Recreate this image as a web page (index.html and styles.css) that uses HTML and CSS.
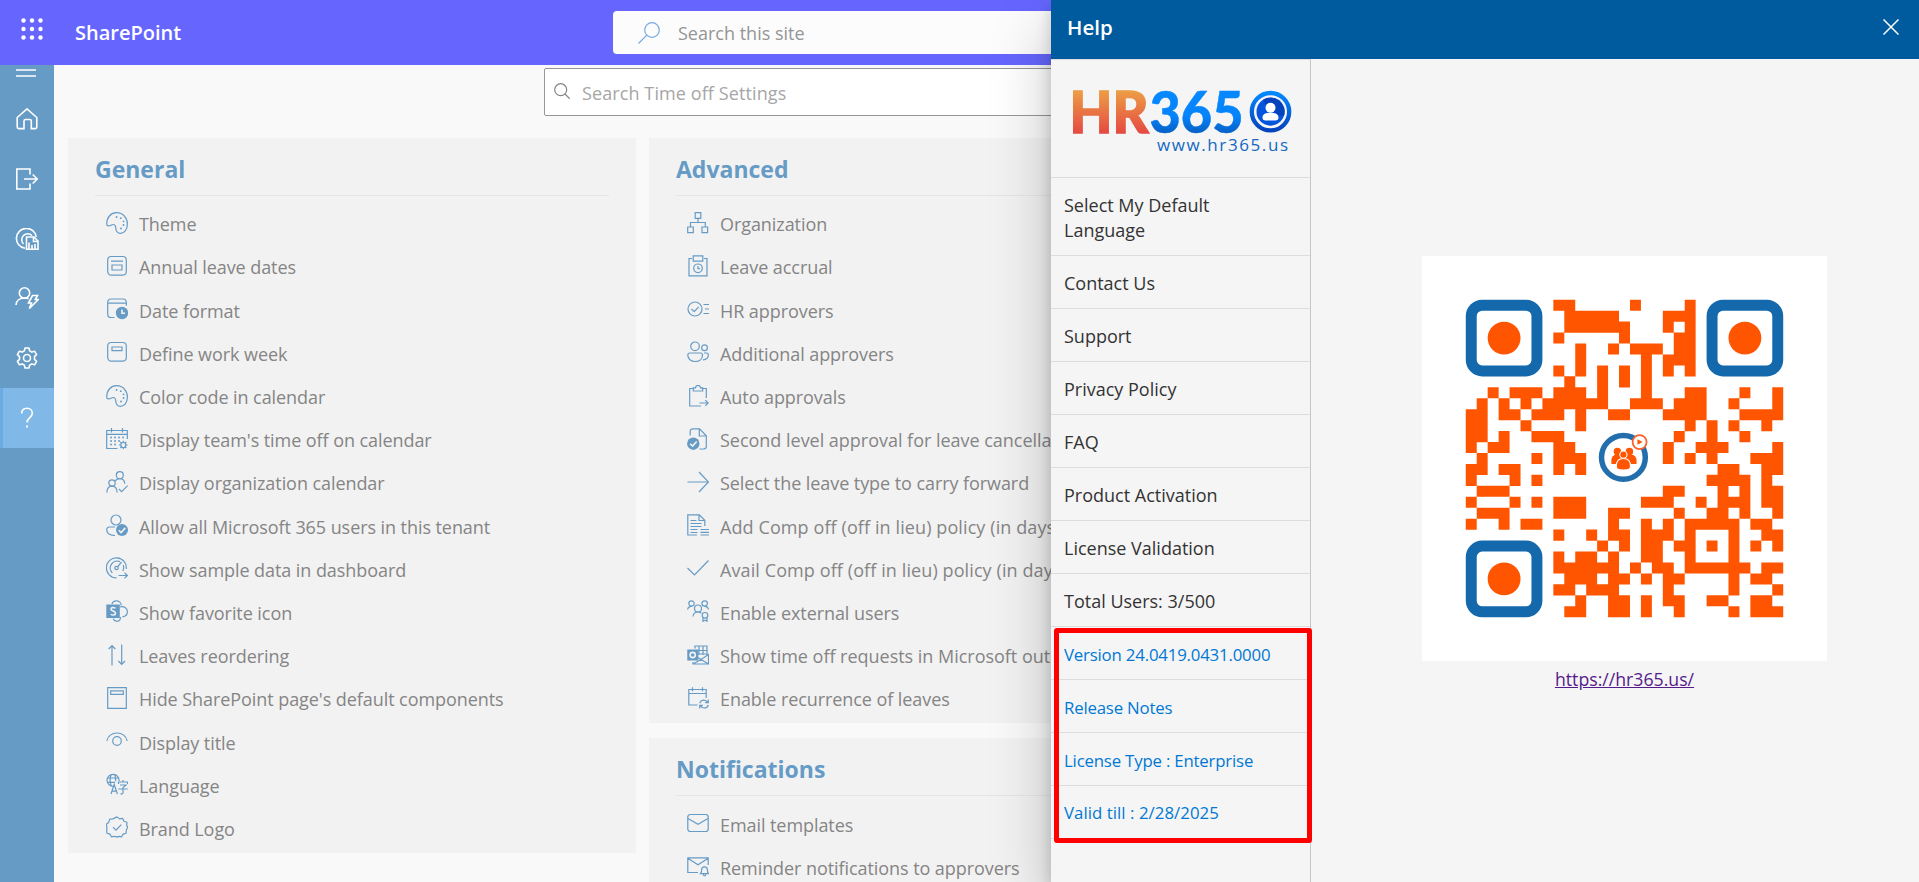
FILE: index.html
```html
<!DOCTYPE html>
<html lang="en">
<head>
<meta charset="utf-8">
<title>SharePoint - Time off Settings</title>
<link rel="stylesheet" href="styles.css">
</head>
<body>
<svg class="defs" aria-hidden="true">
  <symbol id="palette" viewBox="0 0 22 22"><path d="M.7 12C.7 5 5 .7 10.7 .7 17 .7 21.4 6 21.4 12c0 6-3.400 9.400-6.900 9.400-4 0-4.700-2.900-4.800-5.900-.2-3-2.200-3.500-4.200-2.500C3 14.300.7 14.500.7 12z"/><path class="dot" d="M10.500 5h.1M14.700 6.200h.1M17.500 9.300h.1M17.500 13h.1M15 16.500h.1"/></symbol>
  <symbol id="annual" viewBox="0 0 22 22"><rect x="1.700" y="1.500" width="18.600" height="18.600" rx="3.500"/><path d="M5 6.200h12M6 10h10v5H6z"/></symbol>
  <symbol id="dateformat" viewBox="0 0 22 22"><path d="M8.500 19.500H5a3.300 3.300 0 0 1-3.300-3.300V4.200A3.300 3.300 0 0 1 5 1h12a3.300 3.300 0 0 1 3.300 3.300v3.500M1.700 5.200h18.600"/><circle class="fill" cx="16" cy="15" r="6.200"/><path class="cut" d="M16 11.500V15.300h3"/></symbol>
  <symbol id="workweek" viewBox="0 0 22 22"><rect x="1.700" y="1.500" width="18.600" height="18.600" rx="3.500"/><path d="M6 6h10v3.700H6z"/></symbol>
  <symbol id="teamcal" viewBox="0 0 22 22"><path d="M11.500 20.500H.7v-18h20.600V11M.7 6.300h20.600M5.500 0v4.500M16.500 0v4.500"/><path class="dot" d="M5 9.500h.1M9 9.500h.1M13 9.500h.1M17 9.500h.1M5 13h.1M9 13h.1M13 13h.1M5 16.500h.1M9 16.500h.1"/><circle cx="17.300" cy="17" r="2.500"/><path d="M17.300 12.800v1.700M17.300 19.500v1.700M13 17h1.800M19.800 17h1.800M14.300 14l1.200 1.200M19 18.800l1.300 1.200M20.300 14L19 15.200M15.500 18.800L14.300 20"/></symbol>
  <symbol id="orgcal" viewBox="0 0 22 22"><circle cx="13.800" cy="4.200" r="3.500"/><circle cx="6" cy="12" r="3.200"/><path d="M.8 21.500C1 17.500 3 15.200 6 15.200s5 2.300 5.200 6.300M9.200 9.800c1-1.400 2.700-2.200 4.600-2.200 3 0 4.700 2 5 5M13 18l2.600 2.600 6-6"/></symbol>
  <symbol id="allowusers" viewBox="0 0 22 22"><circle cx="10" cy="6" r="5"/><path d="M9 13H3.500C1.500 13 .7 14.300 .7 15.500c0 3.700 3.300 5.900 8.300 6"/><circle class="fill" cx="16" cy="16" r="6"/><path class="cut" d="M12.800 16.200l2.300 2.300 4.200-4.600"/></symbol>
  <symbol id="gauge" viewBox="0 0 22 22"><path d="M10.500 20.800A10 10 0 1 1 20.300 12"/><path d="M6.300 16A7 7 0 0 1 14 4.600M17.200 8c.8 2 .7 4-.4 6M11.600 9.800L15.500 5M12.500 18.500h8.500M18.500 15.700l2.800 2.800-2.800 2.800"/><circle cx="10.500" cy="11" r="1.700"/></symbol>
  <symbol id="sp" viewBox="0 0 22 22"><path d="M6 4C6.500 2 8.300.8 10.400.8c2.700 0 4.700 2 4.800 4.600M14 7c3.800-1.200 7.400 1 7.400 4.600 0 3-2 5-5 5.200M14.500 17c0 2.500-1.400 4.300-3.600 4.300-1.800 0-3.200-1-3.600-2.600"/><rect class="fill" x=".3" y="4.500" width="13.500" height="13.500"/><path class="cut" d="M9.500 8.200C7 7 5 7.500 5 9.200c0 2.200 4.500 1.500 4.500 4 0 1.900-2.500 2.300-4.800 1.200"/></symbol>
  <symbol id="reorder" viewBox="0 0 22 22"><path d="M6 21.500V1.500M2.700 5L6 1.500 9.300 5M15.700.5v20M12.400 17l3.300 3.500L19 17"/></symbol>
  <symbol id="hidepage" viewBox="0 0 22 22"><path d="M1.700 .7h18.600v20.600H1.700zM4.700 3.800h12.600v3.500H4.700z"/></symbol>
  <symbol id="eye" viewBox="0 0 22 22"><path d="M.8 11C1.600 6 6 3 11 3s9.400 3 10.200 8"/><circle cx="11" cy="11" r="4.300"/></symbol>
  <symbol id="lang" viewBox="0 0 22 22"><path d="M8 13.200A6 6 0 1 1 13 8M1 5h11.500M1 9.300h8M5.300 13C3.700 9 3.700 5 5.300 1.200M8.300 1.200c1.200 2 1.500 4 1.300 7M5 21l3.200-9.500L11.400 21M6 18.200h4.500M12.500 11V9h9v2M17 7v2M14 12h6l-3 2.500v5c0 1.200-.6 1.500-2.500 1.300M12.300 16h9.400"/></symbol>
  <symbol id="brand" viewBox="0 0 22 22"><path d="M11 .9l2.500 2 3.100-.6 1.300 2.900 3 1-.2 3.200 1 1.900-1.400 2.800-.2 3.100-3 .9-1.500 2.700-3.100-.5L11 21.100l-2.500-.8-3.100.5-1.500-2.700-3-.9L.7 14.100.9 11.300.3 8.400l2.500-2.200.9-3 3.200-.3z" stroke-linejoin="round"/><path d="M7 11.200l3 3 5.300-5.500"/></symbol>
  <symbol id="org" viewBox="0 0 22 22"><path d="M8.200.7h5.600v5.600H8.200zM.7 15h5.600v5.600H.7zM15 15h5.600v5.600H15zM11 6.300v4.200M3.500 15v-4.500h14.800V15"/></symbol>
  <symbol id="accrual" viewBox="0 0 22 22"><path d="M5 3.500H2v17.300h18V3.500h-3M6.200.9h9.600v5.300H6.200z"/><circle cx="11" cy="13.300" r="4.300"/><path d="M11 11v2.600h2"/></symbol>
  <symbol id="approver" viewBox="0 0 22 22"><circle cx="8" cy="11" r="7"/><path d="M4.500 11l2.700 2.700 4.500-4.800M16.500 6.500H22M18 11h4M16.500 15.500H22"/></symbol>
  <symbol id="people" viewBox="0 0 22 22"><circle cx="8" cy="5.300" r="4.300"/><circle cx="17.500" cy="6.700" r="2.900"/><path d="M3 12h10.500c1.300 0 2 .8 2 2 0 4-3 6.500-7.300 6.500S.8 18 .8 14c0-1.200.9-2 2.200-2zM17 12h2.500c1.200 0 1.900.7 1.900 1.800 0 3-1.900 4.900-5.400 5"/></symbol>
  <symbol id="clip" viewBox="0 0 22 22"><path d="M14 21H2.700V3.500h3.600M14.700 3.500h4.600V13M6.300 2.800h2.300a2.400 2.400 0 0 1 4.800 0h2.300V6H6.300zM12.500 18h8.700M18.300 15.200l2.900 2.800-2.900 2.900"/></symbol>
  <symbol id="doccheck" viewBox="0 0 22 22"><path d="M3.200 7.500V3.200A2.400 2.400 0 0 1 5.600.8h7l6.700 7v10.800a2.400 2.400 0 0 1-2.400 2.400h-4.500M12.300.8V8h7"/><circle class="fill" cx="6.300" cy="15.700" r="6.200"/><path class="cut" d="M3.200 15.800l2.300 2.300 4.200-4.600"/></symbol>
  <symbol id="arrow" viewBox="0 0 22 22"><path d="M.5 11h21M12 1l9.500 10L12 21"/></symbol>
  <symbol id="doclines" viewBox="0 0 22 22"><path d="M10 21H.8V.8h11.500l5.500 5.500V12M12 .8v5.700h5.800M3.500 6.500h6M3.500 9.500h11M3.500 12.500h11M3.500 15.500h7M3.500 18.500h7M13.500 15.500H22M13.500 18.300H22M13.500 21H22"/></symbol>
  <symbol id="check" viewBox="0 0 22 22"><path d="M.5 11l7 7L21.500 3.500"/></symbol>
  <symbol id="extusers" viewBox="0 0 22 22"><circle cx="4.500" cy="3.500" r="2.700"/><circle cx="17.700" cy="3.500" r="2.700"/><circle cx="11" cy="8.500" r="3.500"/><path d="M.6 9.500c.3-2 1.700-3.200 3.900-3.200M21.500 9.500c-.3-2-1.700-3.200-3.900-3.200M6 16.500c.3-2.800 2.200-4.500 5-4.500 1.500 0 2.500.4 3.400 1.200M16 17.500V21.300l2-1.200 2 1.200v-3.800"/><circle cx="18" cy="15.300" r="2.800"/></symbol>
  <symbol id="outlook" viewBox="0 0 22 22"><path d="M8 4.500V2h12v9M8 6.500h12M8 10h12M12 2v9M16 2v9M6 18v2h15.500V10.500L14 15.500l7.500 4.500M6 20l8-4.500-4-2.500"/><rect class="fill" x=".3" y="5.500" width="11" height="11"/><circle class="cut" cx="5.700" cy="11" r="2.600"/></symbol>
  <symbol id="recur" viewBox="0 0 22 22"><path d="M10.500 18H1.800V2.500h17.400V11M1.800 6.500h17.400M5.500 .3v4M15.500.3v4M12.800 16.300c.5-2 2-3.200 4-3.200 1.800 0 3 .8 4 2.300M21.300 12.500v3.200h-3.200M21.300 18c-.6 2-2 3-4 3-1.800 0-3-.7-4-2.200M12.700 21.500v-3.200h3.200"/></symbol>
  <symbol id="mail" viewBox="0 0 22 22"><rect x=".8" y="2.500" width="20.400" height="17" rx="2.500"/><path d="M1 6.500l10 5.800 10-5.800"/></symbol>
  <symbol id="reminder" viewBox="0 0 22 22"><path d="M11 17.500H.8V2.800h20.400V10M.8 3.200L11 9.700l10.200-6.500M13.500 18.700h8c-1-1-1.100-1.700-1.100-3.800 0-1.900-1.200-3-2.900-3s-2.900 1.100-2.900 3c0 2.100-.1 2.800-1.100 3.800zM16.300 19c0 2.500 2.500 2.500 2.500 0"/></symbol>
</svg>

<header class="suite">
  <svg class="waffle" viewBox="0 0 22 22"><g><circle cx="2.500" cy="2.500" r="2.200"/><circle cx="11" cy="2.500" r="2.200"/><circle cx="19.500" cy="2.500" r="2.200"/><circle cx="2.500" cy="11" r="2.200"/><circle cx="11" cy="11" r="2.200"/><circle cx="19.500" cy="11" r="2.200"/><circle cx="2.500" cy="19.500" r="2.200"/><circle cx="11" cy="19.500" r="2.200"/><circle cx="19.500" cy="19.500" r="2.200"/></g></svg>
  <span class="suite-name">SharePoint</span>
  <div class="site-search">
    <svg viewBox="0 0 22 22"><circle cx="14" cy="8" r="7.300"/><path d="M8.800 13.200L.5 21.500"/></svg>
    <span>Search this site</span>
  </div>
</header>

<div class="body">
  <nav class="rail">
    <svg class="burger" viewBox="0 0 20 8"><path d="M0 1h20M0 7h20"/></svg>
    <a class="rail-item low"><svg viewBox="0 0 22 22"><path d="M1.200 9.500L11 .9l9.800 8.600V19a1.600 1.600 0 0 1-1.600 1.600h-3.900V13a1.500 1.500 0 0 0-1.500-1.500H9.500A1.500 1.500 0 0 0 8 13v7.600H2.800A1.600 1.600 0 0 1 1.200 19z"/></svg></a>
    <a class="rail-item low"><svg viewBox="0 0 22 22"><path d="M14 6.500V1H.8v20H14v-5.500M8 11h13M16.700 6.500l4.500 4.500-4.500 4.500"/></svg></a>
    <a class="rail-item low"><svg viewBox="0 0 24 22"><path d="M10 20.300A10 10 0 1 1 21.300 9M8.500 16A6 6 0 1 1 17 7.500M11.500 9h7.500l4 4v8.300H11.500zM18.500 9v4.500H23M14 20.500v-6M17 20.500V17M20 20.500V16"/></svg></a>
    <a class="rail-item"><svg viewBox="0 0 24 22"><circle cx="9.500" cy="6" r="5.200"/><path d="M1 18c.3-4.300 3.700-7 8.500-7 1.800 0 3 .3 4 .8M17.500 8.500h5l-2.200 4h3l-9 9 2.200-5.500h-3z"/></svg></a>
    <a class="rail-item"><svg viewBox="0 0 22 22"><circle cx="11" cy="11" r="3.500"/><path stroke-linejoin="round" d="M9 1h4l.6 2.800 2.200 1.300 2.800-.9 2 3.400-2.100 2v2.800l2.100 2-2 3.400-2.800-.9-2.200 1.300L13 21H9l-.6-2.800-2.200-1.300-2.800.9-2-3.400 2.100-2V9.600l-2.100-2 2-3.400 2.800.9 2.200-1.300z"/></svg></a>
    <a class="rail-item active"><svg viewBox="0 0 22 22"><path d="M5.700 6.500C5.700 3 8 1.200 11 1.200s5.300 1.900 5.300 5c0 4.300-5.300 4.500-5.300 9.300M11 18.300v2.400"/></svg></a>
  </nav>

  <main class="content">
    <div class="settings-search">
      <svg viewBox="0 0 16 16"><circle cx="6.700" cy="6.700" r="6"/><path d="M11 11l4.700 4.700"/></svg>
      <span>Search Time off Settings</span>
    </div>
    <div class="columns">
      <div class="column">
        <section class="card">
          <h2>General</h2>
          <ul>
            <li><svg><use href="#palette"/></svg>Theme</li>
            <li><svg><use href="#annual"/></svg>Annual leave dates</li>
            <li><svg><use href="#dateformat"/></svg>Date format</li>
            <li><svg><use href="#workweek"/></svg>Define work week</li>
            <li><svg><use href="#palette"/></svg>Color code in calendar</li>
            <li><svg><use href="#teamcal"/></svg>Display team's time off on calendar</li>
            <li><svg><use href="#orgcal"/></svg>Display organization calendar</li>
            <li><svg><use href="#allowusers"/></svg>Allow all Microsoft 365 users in this tenant</li>
            <li><svg><use href="#gauge"/></svg>Show sample data in dashboard</li>
            <li><svg><use href="#sp"/></svg>Show favorite icon</li>
            <li><svg><use href="#reorder"/></svg>Leaves reordering</li>
            <li><svg><use href="#hidepage"/></svg>Hide SharePoint page's default components</li>
            <li><svg><use href="#eye"/></svg>Display title</li>
            <li><svg><use href="#lang"/></svg>Language</li>
            <li><svg><use href="#brand"/></svg>Brand Logo</li>
          </ul>
        </section>
      </div>
      <div class="column">
        <section class="card">
          <h2>Advanced</h2>
          <ul>
            <li><svg><use href="#org"/></svg>Organization</li>
            <li><svg><use href="#accrual"/></svg>Leave accrual</li>
            <li><svg><use href="#approver"/></svg>HR approvers</li>
            <li><svg><use href="#people"/></svg>Additional approvers</li>
            <li><svg><use href="#clip"/></svg>Auto approvals</li>
            <li class="even"><svg><use href="#doccheck"/></svg>Second level approval for leave cancellation</li>
            <li><svg><use href="#arrow"/></svg>Select the leave type to carry forward</li>
            <li class="roomy"><svg><use href="#doclines"/></svg>Add Comp off (off in lieu) policy (in days)</li>
            <li class="roomy"><svg><use href="#check"/></svg>Avail Comp off (off in lieu) policy (in days)</li>
            <li><svg><use href="#extusers"/></svg>Enable external users</li>
            <li class="even"><svg><use href="#outlook"/></svg>Show time off requests in Microsoft outlook</li>
            <li><svg><use href="#recur"/></svg>Enable recurrence of leaves</li>
          </ul>
        </section>
        <section class="card">
          <h2>Notifications</h2>
          <ul>
            <li><svg><use href="#mail"/></svg>Email templates</li>
            <li><svg><use href="#reminder"/></svg>Reminder notifications to approvers</li>
          </ul>
        </section>
      </div>
    </div>
  </main>
</div>

<aside class="panel">
  <div class="panel-head">
    <span>Help</span>
    <svg viewBox="0 0 16 16"><path d="M.5 .5l15 15M15.500 .5L.5 15.500"/></svg>
  </div>
  <div class="panel-body">
    <div class="help-nav">
      <div class="logo">
        <svg width="259" height="117" viewBox="0 0 259 117">
          <defs>
            <linearGradient id="warm" gradientUnits="userSpaceOnUse" x1="0" y1="32" x2="0" y2="73"><stop offset="0" stop-color="#ec9b45"/><stop offset="1" stop-color="#e54a42"/></linearGradient>
            <linearGradient id="cool" gradientUnits="userSpaceOnUse" x1="0" y1="32" x2="0" y2="73"><stop offset="0" stop-color="#0588ff"/><stop offset=".6" stop-color="#0583fb"/><stop offset="1" stop-color="#0560c4"/></linearGradient>
            <linearGradient id="ring" x1="0" y1="0" x2="0" y2="1"><stop offset="0" stop-color="#0588ff"/><stop offset="1" stop-color="#0443bd"/></linearGradient>
          </defs>
          <text class="logo-hr" x="18.500" y="72.500" textLength="79" lengthAdjust="spacingAndGlyphs" fill="url(#warm)" stroke="url(#warm)" stroke-width="1.500">HR</text>
          <text class="logo-hr" x="98.500" y="72.500" textLength="94" lengthAdjust="spacingAndGlyphs" fill="url(#cool)" stroke="url(#cool)" stroke-width=".5">365</text>
          <circle cx="219.500" cy="51.700" r="18.700" fill="none" stroke="url(#ring)" stroke-width="4.300"/>
          <circle cx="219.500" cy="51.700" r="14" fill="#0555dc"/>
          <path d="M212 39.800a14 14 0 0 1 21 16c-3 1-16-4-21-16z" fill="#0443bd"/>
          <circle cx="219.500" cy="47.700" r="5" fill="#fff"/>
          <path d="M211.500 57.500c0-3.500 3.500-4.700 8-4.700s8 1.200 8 4.700-3 3-8 3-8 .5-8-3z" fill="#fff"/>
          <text class="logo-url" x="106" y="90.500" textLength="131">www.hr365.us</text>
        </svg>
      </div>
      <a>Select My Default Language</a>
      <a>Contact Us</a>
      <a>Support</a>
      <a>Privacy Policy</a>
      <a>FAQ</a>
      <a>Product Activation</a>
      <a>License Validation</a>
      <a>Total Users: 3/500</a>
      <div class="license">
        <a>Version 24.0419.0431.0000</a>
        <a>Release Notes</a>
        <a>License Type : Enterprise</a>
        <a>Valid till : 2/28/2025</a>
        <div class="highlight"></div>
      </div>
    </div>
    <div class="qr-area">
      <svg class="qr" viewBox="-4 -4 37 37">
        <path transform="translate(0 .5)" stroke="#ff5500" stroke-width="1.010" fill="none" d="
M8 0h2M15 0h1M20 0h1
M9 1h5M18 1h3
M9 2h6M18 2h1M20 2h1
M8 3h1M14 3h1M19 3h2
M10 4h1M13 4h1M15 4h3M19 4h2
M10 5h1M16 5h1M18 5h3
M8 6h1M10 6h1M12 6h1M14 6h1M16 6h1M18 6h1M20 6h1
M9 7h1M12 7h1M14 7h1M16 7h1
M2 8h1M4 8h3M8 8h3M12 8h1M16 8h1M20 8h2M25 8h1M28 8h1
M1 9h1M3 9h1M5 9h1M7 9h6M15 9h3M19 9h3M24 9h1M28 9h1
M0 10h2M3 10h2M6 10h3M10 10h1M13 10h2M18 10h4M25 10h4
M0 11h2M5 11h1M10 11h1M20 11h1M22 11h1M24 11h1M27 11h1
M0 12h2M3 12h1M6 12h3M19 12h1M22 12h1M25 12h1
M0 13h1M2 13h2M8 13h2M18 13h1M21 13h3M28 13h1
M1 14h1M6 14h1M8 14h3M18 14h1M20 14h1M22 14h1M26 14h3
M0 15h2M3 15h2M8 15h1M10 15h1M23 15h2M27 15h2
M0 16h1M4 16h1M6 16h1M22 16h4M27 16h1
M1 17h3M18 17h2M23 17h1M25 17h1M27 17h2
M0 18h1M4 18h1M6 18h1M8 18h3M16 18h3M21 18h1M23 18h3M27 18h2
M1 19h3M8 19h3M13 19h2M19 19h1M22 19h2M25 19h1M28 19h1
M0 20h1M3 20h1M5 20h2M13 20h1M16 20h1M18 20h1M20 20h5M26 20h2
M8 21h1M11 21h1M13 21h2M16 21h3M20 21h1M24 21h1M27 21h2
M12 22h1M14 22h1M16 22h2M19 22h2M22 22h1M24 22h1M26 22h1M28 22h1
M8 23h1M10 23h2M13 23h1M16 23h2M20 23h1M24 23h1
M8 24h6M15 24h1M17 24h2M20 24h6M27 24h2
M9 25h3M13 25h2M16 25h1M18 25h2M24 25h1M26 25h2
M8 26h2M11 26h3M18 26h1M24 26h1M28 26h1
M10 27h1M13 27h2M16 27h1M18 27h2M22 27h2M26 27h2
M9 28h2M13 28h2M16 28h1M19 28h1M24 28h1M26 28h3"/>
        <g fill="none" stroke="#1469ad"><rect x=".5" y=".5" width="6" height="6" rx="1"/><rect x="22.500" y=".5" width="6" height="6" rx="1"/><rect x=".5" y="22.500" width="6" height="6" rx="1"/></g>
        <g fill="#ff5500"><circle cx="3.500" cy="3.500" r="1.500"/><circle cx="25.500" cy="3.500" r="1.500"/><circle cx="3.500" cy="25.500" r="1.500"/></g>
        <circle cx="14.400" cy="14.400" r="2" fill="#fff" stroke="#236fad" stroke-width=".5"/>
        <g fill="#ff5500"><circle cx="13.850" cy="13.850" r=".34"/><circle cx="14.950" cy="13.850" r=".34"/><path d="M13.300 15v-.3c0-.4.3-.6.6-.6h1c.4 0 .7.200.7.600v.3z"/></g>
        <g fill="#ff5500" stroke="#fff" stroke-width=".1"><path d="M13.750 15.200c0-.5.300-.7.650-.7s.65.200.65.700c0 .3-.2.350-.65.350s-.65-.05-.65-.35z"/><circle cx="14.400" cy="14.150" r=".33"/></g>
        <circle cx="15.880" cy="13" r=".64" fill="#fff" stroke="#f9622a" stroke-width=".16"/>
        <path d="M15.680 12.750v.5l.48-.25z" fill="#ff5500"/>
      </svg>
      <a class="site-link">https://hr365.us/</a>
    </div>
  </div>
</aside>
</body>
</html>
```

FILE: styles.css
```css
* { box-sizing: border-box; }
body {
  margin: 0;
  width: 1919px;
  height: 882px;
  overflow: hidden;
  position: relative;
  display: flex;
  flex-direction: column;
  background: #f9f9f9;
  font-family: "Open Sans", "Noto Sans", sans-serif;
  font-size: 18px;
}
svg { display: block; flex: none; fill: none; stroke: currentColor; stroke-width: 1.2; }
.defs { position: absolute; width: 0; height: 0; }

/* suite header */
.suite {
  height: 65px;
  flex: none;
  display: flex;
  align-items: flex-start;
  background: #6666ff;
  color: #fff;
}
.waffle { width: 22px; height: 22px; margin: 18px 0 0 21px; }
.waffle g { fill: #fff; stroke: none; }
.suite-name { width: 537px; margin-left: 32px; margin-right: 1px; font-size: 20px; font-weight: 600; line-height: 66px; letter-spacing: 0; }
.site-search {
  height: 43px;
  width: 900px;
  margin-top: 11px;
  padding-left: 25px;
  display: flex;
  align-items: center;
  gap: 18px;
  border-radius: 4px;
  background: #fcfcfc;
  color: #959595;
}
.site-search svg { width: 22px; height: 22px; color: #76a9e0; }

/* page body */
.body { flex: 1; min-height: 0; display: flex; overflow: hidden; }
.rail {
  width: 54px;
  flex: none;
  display: flex;
  flex-direction: column;
  background: #669bc6;
  color: #fff;
}
.burger { width: 20px; height: 8px; margin: 4px 0 11px 16px; stroke-width: 1.600; }
.rail-item { height: 60px; flex: none; display: flex; align-items: center; justify-content: center; }
.rail-item svg { height: 22px; width: 24px; stroke-width: 1.600; }
.rail-item.low { padding-top: 2px; }
.rail-item.active { background: #80b8e8; border-left: 3px solid #6aabe3; padding-right: 3px; }

.content { flex: 1; min-width: 0; display: flex; flex-direction: column; padding: 3px 14px 0; }
.settings-search {
  width: 900px;
  height: 48px;
  flex: none;
  margin-left: 476px;
  padding: 2px 0 0 9px;
  display: flex;
  align-items: center;
  gap: 12px;
  border: 1px solid #979797;
  border-radius: 2px;
  background: #fff;
  color: #a6a6a6;
  letter-spacing: .1px;
}
.settings-search svg { width: 16px; height: 16px; margin-top: -4px; color: #858585; }

.columns { display: grid; grid-template-columns: 568px 568px; gap: 13px; margin-top: 22px; }
.column { display: flex; flex-direction: column; gap: 15px; align-self: start; }
.card { padding: 0 27px 2.500px; background: #f2f2f2; color: #858585; }
.card h2 {
  height: 58px;
  margin: 0 0 6.700px;
  padding-top: 5px;
  border-bottom: 1px solid #e6e6e6;
  color: #669bc6;
  font-size: 23px;
  font-weight: 700;
  line-height: 53px;
}
.card ul { margin: 0; padding: 0 0 0 11px; list-style: none; }
.card li { height: 43.200px; display: flex; align-items: center; gap: 11px; white-space: nowrap; letter-spacing: -.07px; }
.card li.even { letter-spacing: -.02px; }
.card li.roomy { letter-spacing: .1px; }
.card li svg { width: 22px; height: 22px; margin-bottom: 3px; color: #669bc6; }
.dot { stroke-width: 1.800; stroke-linecap: round; }
.fill { fill: #669bc6; stroke: none; }
.cut { stroke: #f2f2f2; stroke-width: 1.600; }

/* help panel */
.panel {
  position: absolute;
  top: 0;
  right: 0;
  width: 868px;
  height: 882px;
  display: flex;
  flex-direction: column;
  background: #f5f5f5;
  box-shadow: 0 25.600px 57.600px rgba(0,0,0,.22), 0 4.800px 14.400px rgba(0,0,0,.18);
}
.panel-head {
  height: 59px;
  flex: none;
  display: flex;
  align-items: center;
  justify-content: space-between;
  padding: 0 20px 5px 16px;
  background: #005a9e;
  color: #fff;
  font-size: 20.500px;
  font-weight: 600;
}
.panel-head svg { width: 16px; height: 16px; stroke-width: 1.500; }
.panel-body { flex: 1; display: flex; }
.help-nav {
  width: 260px;
  display: flex;
  flex-direction: column;
  border-top: 1px solid #dcdcdc;
  border-right: 1px solid #c6c6c6;
  color: #333;
}
.logo { height: 118px; border-bottom: 1px solid #dcdcdc; }
.logo svg { stroke: none; }
.logo-hr { font: 900 57px Lato, sans-serif; }
.logo-url { font: 17px "Open Sans", sans-serif; fill: #1468c4; }
.help-nav a {
  display: block;
  padding: 15px 80px 12px 13px;
  border-bottom: 1px solid #dcdcdc;
  font-size: 18px;
  line-height: 25px;
}
.license { position: relative; color: #0078d4; }
.license a { padding: 15px 0 12px 13px; font-size: 16.800px; letter-spacing: -.18px; white-space: nowrap; }
.license a:nth-child(4) { padding: 14px 0 13px 13px; letter-spacing: .05px; }
.highlight {
  position: absolute;
  left: 3px;
  top: 1px;
  width: 258px;
  height: 215px;
  border: 5px solid #ff0000;
  border-radius: 3px;
}
.qr-area { padding: 197px 0 0 111px; display: flex; flex-direction: column; align-items: center; }
.qr { width: 405px; height: 405px; background: #fff; stroke: none; stroke-width: 1; }
.site-link { margin-top: 6px; color: #551a8b; font-size: 17.700px; line-height: 24px; text-decoration: underline; }
```
